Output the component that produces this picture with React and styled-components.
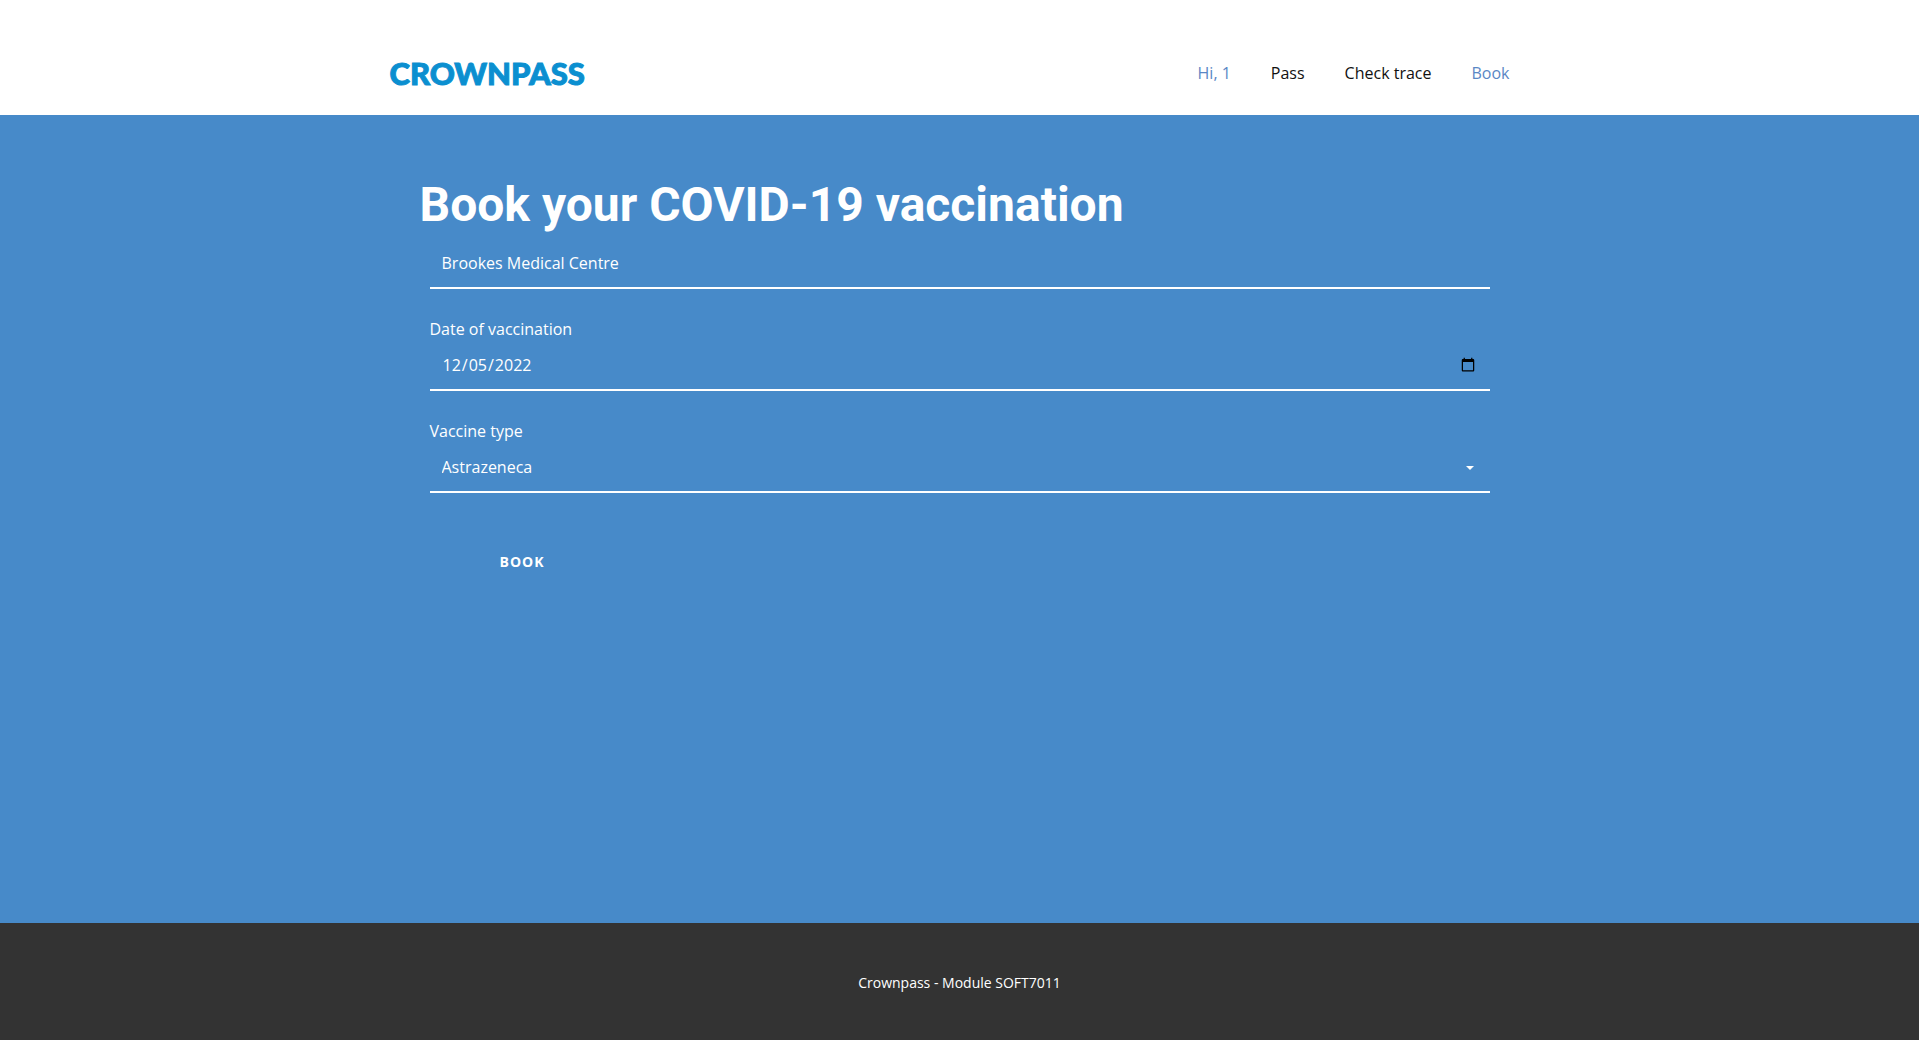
import React from "react";
import styled, { createGlobalStyle, css } from "styled-components";

const GlobalStyle = createGlobalStyle`
  *, *::before, *::after { box-sizing: border-box; }
  body {
    margin: 0;
    background: #333333;
    color: #111111;
    font-family: "Open Sans", "Noto Sans", sans-serif;
    font-size: 16px;
    line-height: 24px;
  }
`;

const Page = styled.div`
  display: flex;
  flex-direction: column;
  min-height: 100vh;
`;

const Header = styled.header`
  padding: 32px 20px 1px;
  background: #ffffff;
`;

const HeaderInner = styled.div`
  display: flex;
  align-items: center;
  justify-content: space-between;
  max-width: 1140px;
  height: 82px;
  margin: 0 auto;
`;

const Logo = styled.a`
  color: #0b8fd0;
  font-family: Lato, sans-serif;
  font-size: 31px;
  font-weight: 900;
  line-height: 32px;
  text-decoration: none;
  -webkit-text-stroke: 1px #0b8fd0;
`;

const Nav = styled.nav`
  display: flex;
  gap: 40px;
  padding-right: 20px;
`;

const NavLink = styled.a`
  color: ${({ $accent }) => ($accent ? "#5a87c5" : "#111111")};
  text-decoration: none;
`;

const Main = styled.main`
  flex: 1;
  padding: 60px 20px;
  background: #478ac9;
  color: #ffffff;
`;

const Booking = styled.section`
  max-width: 1080px;
  margin: 0 auto;
`;

const Title = styled.h1`
  margin: 0;
  font-family: Roboto, sans-serif;
  font-size: 48px;
  font-weight: 700;
  line-height: 60px;
`;

const Form = styled.form`
  display: flex;
  flex-direction: column;
  align-items: flex-start;
  gap: 28px;
  padding-top: 4px;
`;

const Field = styled.div`
  display: flex;
  flex-direction: column;
  width: 100%;
  padding: 0 10px;
`;

const Label = styled.label`
  line-height: 24px;
`;

const control = css`
  width: 100%;
  height: 50px;
  padding: 0 12px;
  border: 0;
  border-bottom: 2px solid #ffffff;
  border-radius: 0;
  outline: 0;
  background: transparent;
  color: #ffffff;
  font: inherit;
`;

const Input = styled.input`
  ${control}
`;

const SelectWrap = styled.div`
  display: grid;
  align-items: center;

  & > * { grid-area: 1 / 1; }
`;

const Select = styled.select`
  ${control}
  appearance: none;

  option { color: #111111; }
`;

const Caret = styled.svg`
  justify-self: end;
  width: 8px;
  height: 4px;
  margin-right: 16px;
  fill: #ffffff;
  pointer-events: none;
`;

const Submit = styled.button`
  margin-top: 20px;
  padding: 10px 80px;
  border: 0;
  background: transparent;
  color: #ffffff;
  font: inherit;
  font-size: 14px;
  font-weight: 700;
  line-height: 22px;
  letter-spacing: 1px;
  text-transform: uppercase;
  cursor: pointer;
`;

const Footer = styled.footer`
  padding: 48px 20px 45px;
  background: #333333;
  color: #ffffff;
  font-size: 14px;
  text-align: center;
`;

const FooterText = styled.p`
  margin: 0;
`;

const links = [
  { label: "Hi, 1", accent: true },
  { label: "Pass" },
  { label: "Check trace" },
  { label: "Book", accent: true },
];

export default function App() {
  return (
    <Page>
      <GlobalStyle />
      <Header>
        <HeaderInner>
          <Logo href="#">CROWNPASS</Logo>
          <Nav>
            {links.map(({ label, accent }) => (
              <NavLink key={label} href="#" $accent={accent}>
                {label}
              </NavLink>
            ))}
          </Nav>
        </HeaderInner>
      </Header>
      <Main>
        <Booking>
          <Title>Book your COVID-19 vaccination</Title>
          <Form onSubmit={(event) => event.preventDefault()}>
            <Field>
              <Input type="text" aria-label="Medical centre" defaultValue="Brookes Medical Centre" />
            </Field>
            <Field>
              <Label htmlFor="date">Date of vaccination</Label>
              <Input id="date" type="date" defaultValue="2022-12-05" />
            </Field>
            <Field>
              <Label htmlFor="vaccine">Vaccine type</Label>
              <SelectWrap>
                <Select id="vaccine" defaultValue="Astrazeneca">
                  <option>Astrazeneca</option>
                  <option>Pfizer</option>
                  <option>Moderna</option>
                </Select>
                <Caret viewBox="0 0 8 4" aria-hidden="true">
                  <path d="M0 0h8L4 4z" />
                </Caret>
              </SelectWrap>
            </Field>
            <Submit type="submit">Book</Submit>
          </Form>
        </Booking>
      </Main>
      <Footer>
        <FooterText>Crownpass - Module SOFT7011</FooterText>
      </Footer>
    </Page>
  );
}
